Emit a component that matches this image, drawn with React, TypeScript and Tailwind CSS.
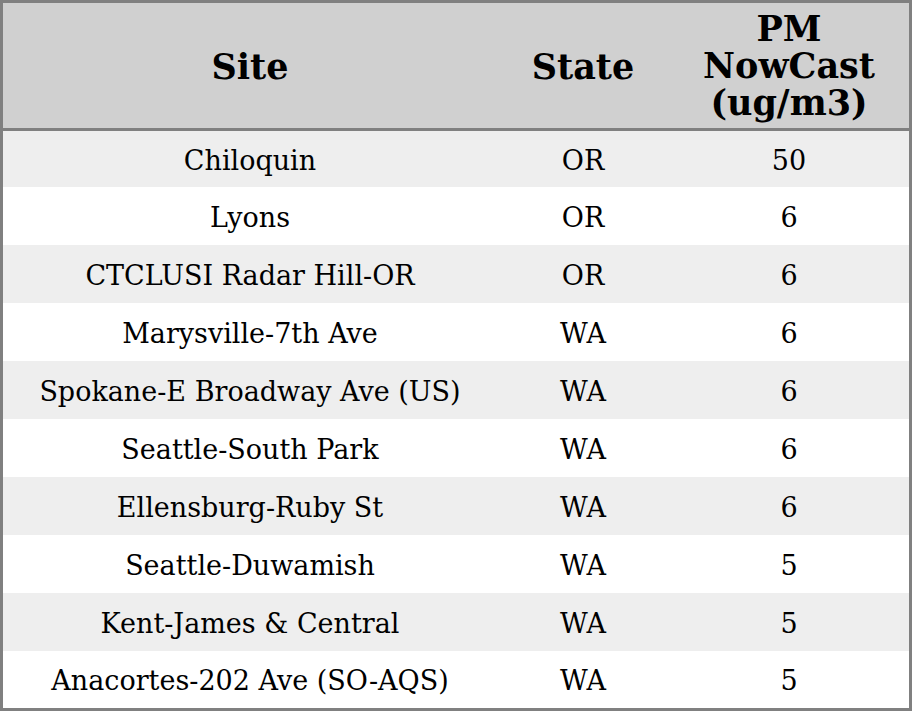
const rows: [string, string, string][] = [
  ["Chiloquin", "OR", "50"],
  ["Lyons", "OR", "6"],
  ["CTCLUSI Radar Hill-OR", "OR", "6"],
  ["Marysville-7th Ave", "WA", "6"],
  ["Spokane-E Broadway Ave (US)", "WA", "6"],
  ["Seattle-South Park", "WA", "6"],
  ["Ellensburg-Ruby St", "WA", "6"],
  ["Seattle-Duwamish", "WA", "5"],
  ["Kent-James & Central", "WA", "5"],
  ["Anacortes-202 Ave (SO-AQS)", "WA", "5"],
];

const heights = ["h-[56px]", "h-[58px]", "h-[58px]", "h-[58px]", "h-[58px]", "h-[58px]", "h-[58px]", "h-[58px]", "h-[58px]", "h-[57px]"];

export default function App() {
  return (
    <div className="w-[912px] h-[711px] bg-white font-['DejaVu_Serif',serif] text-black">
      <div className="border-[3px] border-[#808080] h-full flex flex-col">
        <div className="grid grid-cols-[494px_172px_1fr] h-[125px] bg-[#d0d0d0] border-b-[3px] border-[#808080] box-content text-[35px] font-bold leading-[37px]">
          <div className="flex items-center justify-center pt-[2px]">Site</div>
          <div className="flex items-center justify-center pt-[2px]">State</div>
          <div className="flex items-center justify-center text-center">
            PM
            <br />
            NowCast
            <br />
            (ug/m3)
          </div>
        </div>
        {rows.map((r, i) => (
          <div
            key={i}
            className={`grid grid-cols-[494px_172px_1fr] items-center pt-1 text-[27px] ${heights[i]} ${i % 2 === 0 ? "bg-[#eeeeee]" : "bg-white"}`}
          >
            <div className="text-center">{r[0]}</div>
            <div className="text-center">{r[1]}</div>
            <div className="text-center">{r[2]}</div>
          </div>
        ))}
      </div>
    </div>
  );
}
